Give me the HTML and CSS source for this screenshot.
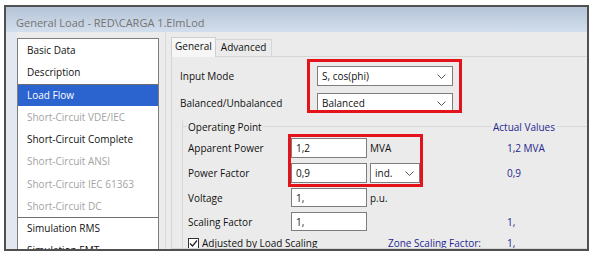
FILE: index.html
```html
<!DOCTYPE html>
<html lang="en">
<head>
  <meta charset="UTF-8" />
  <title>General Load - RED\CARGA 1.ElmLod</title>
  <link rel="stylesheet" href="styles.css">
</head>
<body>
  <div class="window">
    <div class="titlebar">General Load - RED\CARGA 1.ElmLod</div>
    <div class="client">
      <ul class="pages">
        <li>Basic Data</li>
        <li>Description</li>
        <li class="sep selected">Load Flow</li>
        <li class="off">Short-Circuit VDE/IEC</li>
        <li>Short-Circuit Complete</li>
        <li class="off">Short-Circuit ANSI</li>
        <li class="off">Short-Circuit IEC 61363</li>
        <li class="off">Short-Circuit DC</li>
        <li class="sep">Simulation RMS</li>
        <li>Simulation EMT</li>
      </ul>

      <div class="pane">
        <div class="tabs">
          <span class="tab active">General</span>
          <span class="tab">Advanced</span>
        </div>
        <div class="page">
          <div class="form">
            <label>Input Mode</label>
            <div class="select wide">S, cos(phi)<svg width="9" height="5"><polyline points="0.5,0.5 4.5,4.5 8.5,0.5" /></svg></div>
            <label>Balanced/Unbalanced</label>
            <div class="select wide">Balanced<svg width="9" height="5"><polyline points="0.5,0.5 4.5,4.5 8.5,0.5" /></svg></div>
          </div>

          <div class="group">
            <div class="group-head">
              <span class="line short"></span>
              <span class="caption">Operating Point</span>
              <span class="line"></span>
              <span class="caption actual">Actual Values</span>
              <span class="line tail"></span>
            </div>
            <div class="grid">
              <label>Apparent Power</label>
              <div class="input">1,2</div>
              <span class="unit">MVA</span>
              <span class="value">1,2 MVA</span>

              <label>Power Factor</label>
              <div class="input">0,9</div>
              <div class="select small">ind.<svg width="9" height="5"><polyline points="0.5,0.5 4.5,4.5 8.5,0.5" /></svg></div>
              <span class="value">0,9</span>

              <label>Voltage</label>
              <div class="input">1,</div>
              <span class="unit">p.u.</span>
              <span class="value"></span>

              <label>Scaling Factor</label>
              <div class="input">1,</div>
              <span class="unit"></span>
              <span class="value">1,</span>

              <label class="check"><span class="box"><svg width="9" height="9"><polyline points="1,4.5 3.5,7 8,1.5" /></svg></span>Adjusted by Load Scaling</label>
              <span class="unit zone">Zone Scaling Factor:</span>
              <span class="value">1,</span>
            </div>
          </div>
        </div>
      </div>
    </div>

    <div class="mark mark-mode"></div>
    <div class="mark mark-power"></div>
  </div>
</body>
</html>
```

FILE: styles.css
```css
body {
  margin: 0;
  background: #fff;
  font-family: 'Open Sans', 'Noto Sans', sans-serif;
  font-size: 10px;
  color: #111;
}
.window {
  position: relative;
  margin: 5px 0 0 4px;
  width: 581px;
  height: 242px;
  border: 2px solid #505050;
  background: #ebebeb;
  overflow: hidden;
}
.titlebar {
  height: 17px;
  padding: 8px 0 0 10px;
  background: linear-gradient(#b5c4d7, #d2deec);
  color: #747474;
  font-size: 11px;
  line-height: 16px;
}
.client {
  display: flex;
  padding-left: 11px;
  height: 217px;
  background: linear-gradient(to right, #e3e7ee 11px, #ebebeb 11px);
}
.pages {
  list-style: none;
  margin: 6px 0 0;
  padding: 0;
  width: 140px;
  border: 1px solid #7d7d7d;
  border-bottom: none;
  background: #fff;
  overflow: hidden;
  flex-shrink: 0;
}
.pages li {
  height: 22.25px;
  line-height: 22px;
  padding-left: 9px;
  white-space: nowrap;
}
.pages li.sep {
  box-shadow: inset 0 1px 0 #6f6f6f;
}
.pages li.selected {
  background: #2b63cf;
  color: #fff;
}
.pages li.off {
  color: #a3a3a3;
}
.pane {
  flex: 1;
  margin-left: 6px;
  border-left: 1px solid #d8d8d8;
  padding: 5px 0 0 5px;
  display: flex;
  flex-direction: column;
}
.tabs {
  display: flex;
  align-items: flex-end;
  height: 19px;
  flex-shrink: 0;
}
.tab {
  height: 16px;
  line-height: 15px;
  padding: 0 5px;
  border: 1px solid #d6d6d6;
  border-bottom: none;
}
.tab.active {
  height: 19px;
  line-height: 16px;
  padding: 0 3px;
  background: #f6f6f6;
  border-color: #cfcfcf;
  position: relative;
  margin-bottom: -1px;
  z-index: 1;
}
.tab + .tab {
  border-left: none;
}
.page {
  flex: 1;
  border: 1px solid #d6d6d6;
  border-right: none;
  padding: 9px 0 0 8px;
  overflow: hidden;
}
.form {
  display: grid;
  grid-template-columns: 137px 136px;
  grid-auto-rows: 20px;
  row-gap: 7px;
  align-items: center;
}
.select {
  box-sizing: border-box;
  height: 20px;
  border: 1px solid #7d7d7d;
  background: #fff;
  display: flex;
  align-items: center;
  justify-content: space-between;
  padding: 0 6px 0 4px;
}
.select svg polyline {
  fill: none;
  stroke: #555;
  stroke-width: 1;
}
.select.small {
  width: 50px;
  padding-right: 5px;
}
.group {
  margin: 7px 0 0 2px;
  border-left: 1px solid #d7d7d7;
  height: 200px;
}
.group-head {
  display: flex;
  align-items: center;
  height: 13px;
  margin-left: -1px;
}
.line {
  flex: 1;
  height: 1px;
  background: #d7d7d7;
}
.line.short {
  flex: 0 0 5px;
}
.line.tail {
  flex: 0 0 30px;
}
.caption {
  padding: 0 1px;
  white-space: nowrap;
}
.caption.actual {
  color: #262690;
  padding: 0 2px;
}
.grid {
  display: grid;
  grid-template-columns: 103px 76px 140px 60px;
  grid-template-rows: 20px 20px 19px 19px 14px;
  row-gap: 5px;
  align-items: center;
  margin: 5px 0 0 5px;
}
.input {
  box-sizing: border-box;
  height: 100%;
  border: 1px solid #7d7d7d;
  background: #fff;
  padding-left: 4px;
  display: flex;
  align-items: center;
}
.unit {
  padding-left: 3px;
}
.grid .select.small {
  margin-left: 3px;
}
.value {
  color: #262690;
}
.check {
  grid-column: 1 / 3;
  display: flex;
  align-items: center;
  gap: 3px;
}
.box {
  box-sizing: border-box;
  width: 11px;
  height: 11px;
  border: 1px solid #333;
  background: #fff;
  display: flex;
  align-items: center;
  justify-content: center;
}
.box svg polyline {
  fill: none;
  stroke: #222;
  stroke-width: 1.2;
}
.unit.zone {
  padding-left: 21px;
  color: #262690;
}
.mark {
  position: absolute;
  border: 3px solid #e3121b;
}
.mark-mode {
  left: 301px;
  top: 52px;
  width: 149px;
  height: 48px;
}
.mark-power {
  left: 282px;
  top: 127px;
  width: 129px;
  height: 47px;
}
```
